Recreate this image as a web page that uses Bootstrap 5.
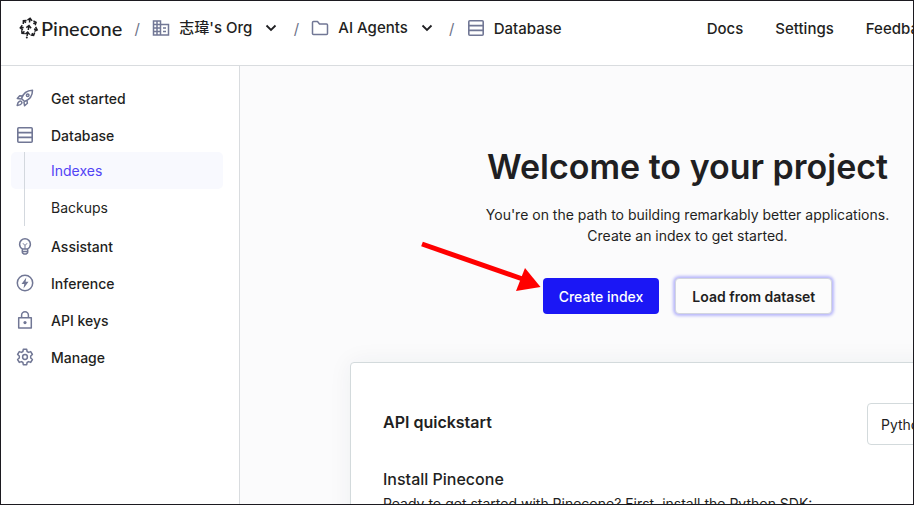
<!DOCTYPE html>
<html lang="en">
<head>
<meta charset="utf-8">
<meta name="viewport" content="width=device-width, initial-scale=1">
<title>Pinecone Console</title>
<link href="https://cdn.jsdelivr.net/npm/bootstrap@5.3.0/dist/css/bootstrap.min.css" rel="stylesheet">
<style>
body { font-family: Inter, "Noto Sans CJK TC", sans-serif; font-size: 14px; line-height: 21px; color: #1f1f22; }
.frame { border: 1px solid #1c1a20; background: #fff; }
.console { min-width: 1134px; }
.line { border-color: #d9dcdf !important; }
.topbar { height: 65px; padding: 0 199px 10px 18px; font-size: 15px; }
.topbar a, .topbar button { color: inherit; font-weight: 500; text-decoration: none; }
.topbar svg, .side svg { color: #717795; flex: none; }
.topbar .brand, .topbar .brand svg, .topbar .chev { color: #1f1f22; }
.topbar .brand { font-family: Lato, sans-serif; font-size: 20px; gap: 2px; }
.slash { color: #6d7288; width: 30px; text-align: center; }
.crumb { gap: 9px; }
.crumb.btn { font-size: 15px; }
.links { gap: 32px; }
.side { width: 239px; padding: 14px 16px 14px 10px; }
.side ul { margin: 0; }
.main-list { display: grid; gap: 1px; }
.item { height: 36px; padding-left: 5px; gap: 17px; color: inherit; font-weight: 500; text-decoration: none; }
.side .sub-list { margin: -1px 0 1px; position: relative; }
.sub-list::before { content: ""; position: absolute; left: 13px; top: 0; bottom: 0; border-left: 1px solid #d3d8de; }
.sub-item { height: 37px; padding-left: 40px; border-radius: 5px; color: inherit; text-decoration: none; }
.sub-item.current { background: #f8f9fe; color: #5244f5; }
.stage { background: #fbfbfc; padding-top: 76px; }
.stage h1 { font-size: 34px; line-height: 50px; font-weight: 600; margin-bottom: 12px; }
.actions { gap: 16px; margin: 32px 0 48px; }
.act { height: 36px; padding: 1px 16px 0; font-size: 14px; line-height: 20px; border-radius: 4px; }
.act-main, .act-main:hover { background: #1b17f5; color: #fff; font-weight: 500; border: 0; }
.act-alt, .act-alt:hover { background: #fcfcfc; color: #1f1f22; font-weight: 600; border: 1px solid #d2d5df; box-shadow: 0 0 3px 2px #b9b8fa; }
.quick { width: 675px; padding: 40px 32px 32px; background: #fff; border: 1px solid #d3dadc; border-radius: 4px; box-shadow: 0 0 24px rgba(40, 50, 70, .06); }
.quick h2 { font-size: 16px; line-height: 24px; font-weight: 600; }
.quick h3 { font-size: 16px; line-height: 24px; font-weight: 500; margin: 22px 0 2px; }
.lang { width: 125px; height: 42px; padding-left: 13px; font-size: 14px; color: #1f1f22; border-color: #d3dadc; border-radius: 4px; }
.pointer { position: absolute; left: 180px; top: 174px; pointer-events: none; }
</style>
<script src="https://cdn.jsdelivr.net/npm/bootstrap@5.3.0/dist/js/bootstrap.bundle.min.js" defer></script>
</head>
<body>
<svg class="d-none" aria-hidden="true">
  <symbol id="rows" viewBox="0 0 18 18"><g fill="none" stroke="currentColor" stroke-width="1.600"><rect x="1.800" y="1.800" width="14.400" height="14.400" rx="1"/><path d="M2 6.600h14M2 11.400h14"/></g></symbol>
  <symbol id="chev" viewBox="0 0 12 8"><path fill="none" stroke="currentColor" stroke-width="1.800" d="m1.500 1.500 4.500 4.500 4.500-4.500"/></symbol>
</svg>
<div class="frame vh-100 overflow-hidden">
<div class="console h-100 d-flex flex-column">
  <header class="topbar line border-bottom d-flex align-items-center flex-shrink-0">
    <a class="brand d-flex align-items-center" href="#">
      <svg width="20" height="22" viewBox="0 0 20 22" fill="none" stroke="currentColor" stroke-width="1.500" aria-hidden="true">
        <path d="M10.500 5.500 11 1.500M8.500 3.200l2.600-2 2 2.700M9.300 13l.6-4M7.300 10.600l2.700-2.100 2.100 2.800M8.100 19l.5-3.500M6.300 17l2.400-1.900 2 2.500M7 5.700 4.500 4M4.300 7l.1-3.200 3.200-.3M14.200 6.600l2.700-1.100M14.400 3.800l2.700 1.600-1 2.900M4.700 10.500l-3 .2M3.300 8.300l-2 2.500 2.500 2M15 12l3 .9M16.600 9.800l1.600 3.100-2.800 1.500M5.400 14.300l-2.200 1.900M2.700 13.300l.3 3.100 2.800.2M13 16.200l1.400 2.100M15.700 15.400l-1.100 3-3-.3"/>
        <circle cx="7.800" cy="20.500" r="1" fill="currentColor" stroke="none"/>
      </svg>
      <span>Pinecone</span>
    </a>
    <span class="slash">/</span>
    <button class="crumb btn p-0 border-0 d-flex align-items-center lh-base" type="button">
      <svg width="18" height="18" viewBox="0 0 18 18" fill="none" stroke="currentColor" stroke-width="1.500" aria-hidden="true"><path d="M1.500 2h7v14h-7ZM8.500 5.500h8V16h-8M1.500 5.500h7M1.500 9h7M1.500 12.500h7M5 2v14M11 9h3M11 12.500h3"/></svg>
      <span>志瑋's Org</span>
      <svg class="chev ms-1" width="12" height="8" aria-hidden="true"><use href="#chev"/></svg>
    </button>
    <span class="slash ms-1">/</span>
    <button class="crumb btn p-0 border-0 d-flex align-items-center lh-base" type="button">
      <svg width="18" height="18" viewBox="0 0 18 18" fill="none" stroke="currentColor" stroke-width="1.500" stroke-linejoin="round" aria-hidden="true"><path d="M1.500 15V3.500q0-1 1-1h4L8.500 5h7q1 0 1 1v8.500q0 1-1 1h-13q-1 0-1-1"/></svg>
      <span>AI Agents</span>
      <svg class="chev ms-1" width="12" height="8" aria-hidden="true"><use href="#chev"/></svg>
    </button>
    <span class="slash ms-1">/</span>
    <a class="crumb d-flex align-items-center" href="#">
      <svg width="18" height="18" aria-hidden="true"><use href="#rows"/></svg>
      <span>Database</span>
    </a>
    <nav class="links ms-auto d-flex" aria-label="Help">
      <a href="#">Docs</a><a href="#">Settings</a><a href="#">Feedback</a>
    </nav>
  </header>
  <div class="d-flex flex-grow-1">
    <nav class="side line border-end flex-shrink-0" aria-label="Project">
      <ul class="main-list list-unstyled">
        <li><a class="item d-flex align-items-center" href="#">
          <svg width="18" height="18" viewBox="0 0 18 18" fill="none" stroke="currentColor" stroke-width="1.500" stroke-linejoin="round" aria-hidden="true"><path d="M5.500 9.500C7 5 10.500 1.500 16.500 1.300 16.500 7 13 11 8.500 12.500ZM6.500 7 3.700 6.700 1.300 9.400l4 .5M11 11.500l.4 2.800-2.800 2.500-.7-4M3.500 12.300c1.400-.8 3 .8 2.200 2.200-.6 1-2.600 1.600-4.500 1.900.3-2 1-3.500 2.300-4.100Z"/><circle cx="11.700" cy="6.200" r="1.300"/></svg>
          Get started</a></li>
        <li><a class="item d-flex align-items-center" href="#"><svg width="18" height="18" aria-hidden="true"><use href="#rows"/></svg>Database</a>
          <ul class="sub-list list-unstyled">
            <li><a class="sub-item current d-flex align-items-center" href="#" aria-current="page">Indexes</a></li>
            <li><a class="sub-item d-flex align-items-center" href="#">Backups</a></li>
          </ul></li>
        <li><a class="item d-flex align-items-center" href="#">
          <svg width="18" height="18" viewBox="0 0 18 18" fill="none" stroke="currentColor" stroke-width="1.500" aria-hidden="true"><path d="M6.300 11.800C4.300 10.600 3.600 9 3.600 7.200a5.400 5.400 0 0 1 10.800 0c0 1.800-.7 3.400-2.700 4.600v3.400q0 1-1 1.200l-.6.600H7.900l-.6-.6q-1-.2-1-1.200ZM6.300 12h5.400M6.300 14.400h5.400"/><path stroke-width="1" d="M9 12V8.500M7 6.300l2 2.200 2-2.200"/></svg>
          Assistant</a></li>
        <li><a class="item d-flex align-items-center" href="#">
          <svg width="18" height="18" viewBox="0 0 18 18" fill="none" stroke="currentColor" stroke-width="1.500" aria-hidden="true"><circle cx="9" cy="9" r="7.700"/><path fill="currentColor" stroke="none" d="M10.300 3.500 5.500 9.900h2.800l-.8 4.600 5-6.700H9.600Z"/></svg>
          Inference</a></li>
        <li><a class="item d-flex align-items-center" href="#">
          <svg width="18" height="18" viewBox="0 0 18 18" fill="none" stroke="currentColor" stroke-width="1.500" stroke-linejoin="round" aria-hidden="true"><path d="M2.700 6.700h12.600v10.200H2.700ZM5.600 6.700V4.200a3.400 3.400 0 0 1 6.800 0v2.500"/><circle cx="9" cy="11.600" r="1.600" fill="currentColor" stroke="none"/></svg>
          API keys</a></li>
        <li><a class="item d-flex align-items-center" href="#">
          <svg width="18" height="18" viewBox="0 0 18 18" fill="none" stroke="currentColor" stroke-width="1.500" stroke-linejoin="round" aria-hidden="true"><path d="M7.300 1.300h3.400l.4 2.200 1.500.9 2.100-.8 1.700 2.900-1.700 1.500v2l1.700 1.500-1.700 2.900-2.100-.8-1.500.9-.4 2.200H7.300l-.4-2.200-1.500-.9-2.100.8-1.700-2.900L3.300 10V8L1.600 6.500l1.700-2.900 2.100.8 1.500-.9Z"/><circle cx="9" cy="9" r="2.400"/></svg>
          Manage</a></li>
      </ul>
    </nav>
    <main class="stage position-relative flex-grow-1 d-flex flex-column align-items-center">
      <h1>Welcome to your project</h1>
      <p class="text-center mb-0">You're on the path to building remarkably better applications.<br>Create an index to get started.</p>
      <div class="actions d-flex">
        <button class="btn act act-main" type="button">Create index</button>
        <button class="btn act act-alt" type="button">Load from dataset</button>
      </div>
      <section class="quick">
        <div class="d-flex align-items-center justify-content-between">
          <h2 class="mb-1">API quickstart</h2>
          <select class="form-select lang" aria-label="Language"><option>Python</option><option>JavaScript</option></select>
        </div>
        <h3>Install Pinecone</h3>
        <p>Ready to get started with Pinecone? First, install the Python SDK:</p>
      </section>
      <svg class="pointer" width="122" height="54" viewBox="0 0 122 54" aria-hidden="true"><path stroke="#f00" stroke-width="5" d="m2 4 102 35.500"/><path fill="#f00" d="M105 28 120.500 47 96 51Z"/></svg>
    </main>
  </div>
</div>
</div>
</body>
</html>
